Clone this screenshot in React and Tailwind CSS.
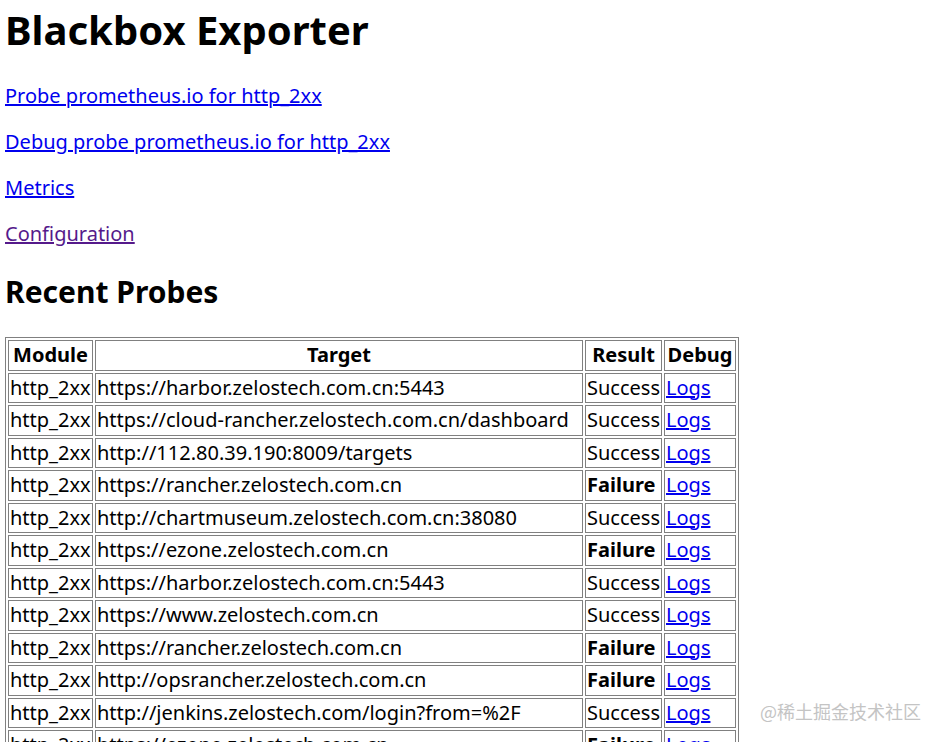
const rows = [
  ["https://harbor.zelostech.com.cn:5443", "Success"],
  ["https://cloud-rancher.zelostech.com.cn/dashboard", "Success"],
  ["http://112.80.39.190:8009/targets", "Success"],
  ["https://rancher.zelostech.com.cn", "Failure"],
  ["http://chartmuseum.zelostech.com.cn:38080", "Success"],
  ["https://ezone.zelostech.com.cn", "Failure"],
  ["https://harbor.zelostech.com.cn:5443", "Success"],
  ["https://www.zelostech.com.cn", "Success"],
  ["https://rancher.zelostech.com.cn", "Failure"],
  ["http://opsrancher.zelostech.com.cn", "Failure"],
  ["http://jenkins.zelostech.com/login?from=%2F", "Success"],
  ["https://ezone.zelostech.com.cn", "Failure"],
];

const cell = "border border-[#808080] p-px whitespace-nowrap";

const App = () => {
  return (
    <div className="relative min-h-screen bg-white px-[5px] pt-[4px] text-black font-['Noto_Sans',sans-serif] text-[20px] leading-[26px]">
      <h1 className="text-[40px] leading-[52px] font-bold">Blackbox Exporter</h1>

      <div className="mt-[27px] flex flex-col gap-[20px]">
        <p>
          <a href="#" className="text-[#0000ee] underline">Probe prometheus.io for http_2xx</a>
        </p>
        <p>
          <a href="#" className="text-[#0000ee] underline">Debug probe prometheus.io for http_2xx</a>
        </p>
        <p>
          <a href="#" className="text-[#0000ee] underline">Metrics</a>
        </p>
        <p>
          <a href="#" className="text-[#551a8b] underline">Configuration</a>
        </p>
      </div>

      <h2 className="mt-[25px] text-[30px] leading-[39px] font-bold">Recent Probes</h2>

      <table className="mt-[26px] border-separate border-spacing-[2px] border border-[#808080] leading-[26.5px]">
        <thead>
          <tr>
            <th className={`${cell} w-[85px] text-center`}>Module</th>
            <th className={`${cell} w-[488px] text-center`}>Target</th>
            <th className={`${cell} w-[77px] text-center`}>Result</th>
            <th className={`${cell} w-[72px] text-center`}>Debug</th>
          </tr>
        </thead>
        <tbody>
          {rows.map(([target, result], i) => (
            <tr key={i}>
              <td className={cell}>http_2xx</td>
              <td className={cell}>{target}</td>
              <td className={cell}>
                {result === "Failure" ? <b>Failure</b> : "Success"}
              </td>
              <td className={cell}>
                <a href="#" className="text-[#0000ee] underline">Logs</a>
              </td>
            </tr>
          ))}
        </tbody>
      </table>

      <div className="absolute left-[760px] top-[698px] text-[18px] leading-[26px] text-[#c4c4c4] font-['Noto_Sans_CJK_SC',sans-serif]">
        @稀土掘金技术社区
      </div>
    </div>
  );
};

export default App;
